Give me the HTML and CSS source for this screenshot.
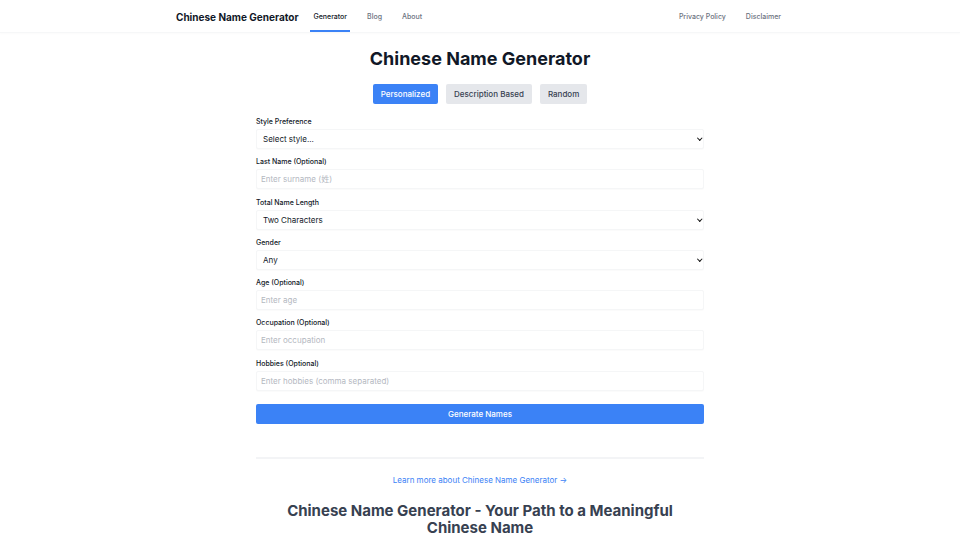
FILE: index.html
```
<!DOCTYPE html>
<html lang="en">
<head>
  <meta charset="UTF-8" />
  <meta name="viewport" content="width=device-width, initial-scale=1.0" />
  <title>Chinese Name Generator</title>
  <link rel="stylesheet" href="styles.css">
</head>
<body>
  <!-- top nav -->
  <header class="topbar">
    <div class="wrap topbar-inner">
      <div class="nav-left">
        <a class="brand" href="#">Chinese Name Generator</a>
        <nav class="links">
          <a class="active" href="#">Generator</a>
          <a href="#">Blog</a>
          <a href="#">About</a>
        </nav>
      </div>
      <nav class="links links-right">
        <a href="#">Privacy Policy</a>
        <a href="#">Disclaimer</a>
      </nav>
    </div>
  </header>

  <main class="wrap main">
    <h1 class="title">Chinese Name Generator</h1>

    <div class="tabs">
      <button class="tab on">Personalized</button>
      <button class="tab">Description Based</button>
      <button class="tab">Random</button>
    </div>

    <form class="form">
      <div class="field">
        <label>Style Preference</label>
        <div class="select"><span>Select style...</span><i class="caret"></i></div>
      </div>
      <div class="field">
        <label>Last Name (Optional)</label>
        <input type="text" placeholder="Enter surname (姓)">
      </div>
      <div class="field">
        <label>Total Name Length</label>
        <div class="select"><span>Two Characters</span><i class="caret"></i></div>
      </div>
      <div class="field">
        <label>Gender</label>
        <div class="select"><span>Any</span><i class="caret"></i></div>
      </div>
      <div class="field">
        <label>Age (Optional)</label>
        <input type="text" placeholder="Enter age">
      </div>
      <div class="field">
        <label>Occupation (Optional)</label>
        <input type="text" placeholder="Enter occupation">
      </div>
      <div class="field">
        <label>Hobbies (Optional)</label>
        <input type="text" placeholder="Enter hobbies (comma separated)">
      </div>
      <button type="button" class="submit">Generate Names</button>
    </form>

    <hr class="divider">

    <a class="more" href="#">Learn more about Chinese Name Generator →</a>

    <h2 class="subtitle">Chinese Name Generator - Your Path to a Meaningful Chinese Name</h2>
  </main>
</body>
</html>
```

FILE: styles.css
```
* { margin: 0; padding: 0; box-sizing: border-box; }
html, body { background: #fff; font-family: Inter, "Noto Sans CJK SC", sans-serif; color: #111827; }
a { text-decoration: none; }

.wrap { width: 640px; margin: 0 auto; padding: 0 16px; }

/* top nav */
.topbar { height: 33px; border-bottom: 1px solid #f6f7f8; box-shadow: 0 1px 2px rgba(0,0,0,0.02); }
.topbar-inner { display: flex; justify-content: space-between; align-items: stretch; height: 32px; }
.nav-left { display: flex; align-items: stretch; }
.brand { display: flex; align-items: center; padding-top: 1px; font-size: 10px; font-weight: 700; color: #111827; margin-right: 12px; }
.links { display: flex; align-items: stretch; gap: 14px; }
.links a {
  display: flex; align-items: center; padding: 2px 3px 0;
  font-size: 7px; font-weight: 500; color: #6b7280;
  border-bottom: 2px solid transparent;
}
.links a.active { color: #111827; border-bottom-color: #3b82f6; }
.links-right { gap: 14px; }

/* main */
.main { display: flex; flex-direction: column; align-items: center; padding-top: 15px; }
.title { font-size: 18px; font-weight: 700; line-height: 22px; color: #111827; }

.tabs { display: flex; gap: 8px; margin-top: 14px; }
.tab {
  height: 20px; padding: 0 8px; border: none; border-radius: 2px;
  background: #e5e7eb; color: #374151;
  font-family: inherit; font-size: 8px; font-weight: 500;
}
.tab.on { background: #3b82f6; color: #fff; }

.form { width: 448px; margin-top: 13px; display: flex; flex-direction: column; gap: 8.3px; }
.field { display: flex; flex-direction: column; gap: 2px; }
.field label { font-size: 7px; font-weight: 500; line-height: 10px; color: #111827; }
.field input, .select {
  height: 20px; width: 100%;
  border: 1px solid #f5f6f7; border-radius: 2px;
  box-shadow: 0 1px 1px rgba(0,0,0,0.02);
  background: #fff; font-family: inherit; font-size: 8px; color: #111827;
  padding: 0 4px; outline: none;
}
.field input::placeholder { color: #b4b8bf; }
.select { display: flex; align-items: center; justify-content: space-between; padding: 0 2px 0 6px; }
.select span { color: #111827; }
.caret {
  width: 3.5px; height: 3.5px; margin-top: -2px;
  border-right: 1.3px solid #111; border-bottom: 1.3px solid #111;
  transform: rotate(45deg);
}

.submit {
  margin-top: 5px; height: 20px; width: 100%;
  border: none; border-radius: 2px; background: #3b82f6; color: #fff;
  font-family: inherit; font-size: 8px; font-weight: 500;
}

.divider { width: 448px; border: none; border-top: 2px solid #f3f4f6; margin-top: 33px; }
.more { margin-top: 16px; font-size: 8px; color: #3b82f6; }
.subtitle {
  margin-top: 17px; width: 448px; text-align: center;
  font-size: 15px; font-weight: 700; line-height: 17px; color: #374151;
}
```
